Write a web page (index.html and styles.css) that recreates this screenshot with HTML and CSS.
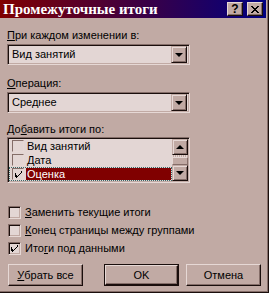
FILE: index.html
```html
<!DOCTYPE html>
<html lang="ru">

<head>
    <meta charset="UTF-8">
    <title>Промежуточные итоги</title>
    <link rel="stylesheet" href="styles.css">
</head>

<body>
    <div class="window">
        <div class="titlebar">
            <span class="title">Промежуточные итоги</span>
            <div class="title-buttons">
                <span class="tbtn">?</span>
                <span class="tbtn">
                    <svg width="8" height="7" viewBox="0 0 8 7">
                        <path d="M0 0h2v1h1v1h2v-1h1v-1h2v1h-1v1h-1v1h-1v1h1v1h1v1h1v1h-2v-1h-1v-1h-2v1h-1v1h-2v-1h1v-1h1v-1h1v-1h-1v-1h-1v-1h-1z" fill="#000"/>
                    </svg>
                </span>
            </div>
        </div>

        <div class="content">
            <div class="field-label"><u>П</u>ри каждом изменении в:</div>
            <div class="combo">
                <span class="combo-value">Вид занятий</span>
                <span class="drop-btn"><span class="arrow-down"></span></span>
            </div>

            <div class="field-label second"><u>О</u>перация:</div>
            <div class="combo">
                <span class="combo-value">Среднее</span>
                <span class="drop-btn"><span class="arrow-down"></span></span>
            </div>

            <div class="field-label third">До<u>б</u>авить итоги по:</div>
            <div class="listbox">
                <div class="list-items">
                    <div class="list-row">
                        <span class="list-check"></span>
                        <span class="row-text">Вид занятий</span>
                    </div>
                    <div class="list-row">
                        <span class="list-check"></span>
                        <span class="row-text">Дата</span>
                    </div>
                    <div class="list-row selected">
                        <span class="list-check checked">
                            <svg width="7" height="7" viewBox="0 0 7 7"><path d="M6 0h1v2h-1v1h-1v1h-1v1h-1v1h-1v1h-1v-1h-1v-4h1v2h1v1h1v-1h1v-1h1v-1h1z" fill="#000"/></svg>
                        </span>
                        <span class="row-text">Оценка</span>
                    </div>
                </div>
                <div class="scrollbar">
                    <span class="sb-btn"><span class="arrow-up"></span></span>
                    <span class="sb-track"></span>
                    <span class="sb-thumb"></span>
                    <span class="sb-btn"><span class="arrow-down"></span></span>
                </div>
            </div>

            <div class="options">
                <div class="option">
                    <span class="check"></span>
                    <span><u>З</u>аменить текущие итоги</span>
                </div>
                <div class="option">
                    <span class="check"></span>
                    <span><u>К</u>онец страницы между группами</span>
                </div>
                <div class="option">
                    <span class="check">
                        <svg width="7" height="7" viewBox="0 0 7 7"><path d="M6 0h1v2h-1v1h-1v1h-1v1h-1v1h-1v1h-1v-1h-1v-4h1v2h1v1h1v-1h1v-1h1v-1h1z" fill="#000"/></svg>
                    </span>
                    <span>Ито<u>г</u>и под данными</span>
                </div>
            </div>

            <div class="buttons">
                <span class="btn"><u>У</u>брать все</span>
                <span class="btn default"><span class="btn-inner">OK</span></span>
                <span class="btn cancel">Отмена</span>
            </div>
        </div>
    </div>
</body>

</html>
```

FILE: styles.css
```css
body {
    margin: 0;
    background: #c1aaa4;
}

.window {
    width: 269px;
    height: 293px;
    box-sizing: border-box;
    padding-right: 3px;
    background: #c1aaa4;
    box-shadow: inset -1px -1px #1a0e0c, inset -2px -2px #846d68;
    font-family: "Liberation Sans", Arial, sans-serif;
    font-size: 11px;
    color: #000;
}

.titlebar {
    height: 18px;
    display: flex;
    align-items: center;
    justify-content: space-between;
    padding: 0 3px 0 3px;
    background: linear-gradient(to right, #800000, #000080);
}

.title {
    color: #fff;
    font-family: "Liberation Serif", "Times New Roman", serif;
    font-weight: bold;
    font-size: 15px;
    line-height: 18px;
}

.title-buttons {
    display: flex;
    gap: 4px;
}

.tbtn {
    width: 16px;
    height: 14px;
    box-sizing: border-box;
    display: flex;
    align-items: center;
    justify-content: center;
    background: #c1aaa4;
    border-top: 1px solid #e6d8d5;
    border-left: 1px solid #e6d8d5;
    border-right: 1px solid #1a0e0c;
    border-bottom: 1px solid #1a0e0c;
    box-shadow: inset -1px -1px #846d68;
    font-family: "Liberation Sans", Arial, sans-serif;
    font-weight: bold;
    font-size: 12px;
    line-height: 12px;
}

.content {
    padding: 11px 0 0 7px;
}

.field-label {
    line-height: 13px;
    margin-bottom: 2px;
}

.field-label.second {
    margin-top: 12px;
}

.field-label.third {
    margin-top: 10px;
    margin-bottom: 1px;
}

.combo {
    width: 183px;
    height: 21px;
    box-sizing: border-box;
    display: flex;
    align-items: center;
    background: #e3d6d4;
    border-top: 1px solid #846d68;
    border-left: 1px solid #846d68;
    border-right: 1px solid #e6d8d5;
    border-bottom: 1px solid #e6d8d5;
    box-shadow: inset 1px 1px #1a0e0c, inset -1px -1px #c1aaa4;
    padding: 2px;
}

.combo-value {
    flex: 1;
    padding-left: 2px;
    line-height: 15px;
}

.drop-btn,
.sb-btn {
    width: 16px;
    height: 17px;
    box-sizing: border-box;
    display: flex;
    align-items: center;
    justify-content: center;
    background: #c1aaa4;
    border-top: 1px solid #c1aaa4;
    border-left: 1px solid #c1aaa4;
    border-right: 1px solid #1a0e0c;
    border-bottom: 1px solid #1a0e0c;
    box-shadow: inset 1px 1px #e6d8d5, inset -1px -1px #846d68;
}

.arrow-down {
    width: 0;
    height: 0;
    border-left: 4px solid transparent;
    border-right: 4px solid transparent;
    border-top: 4px solid #000;
}

.arrow-up {
    width: 0;
    height: 0;
    border-left: 4px solid transparent;
    border-right: 4px solid transparent;
    border-bottom: 4px solid #000;
}

.listbox {
    width: 183px;
    height: 46px;
    box-sizing: border-box;
    display: flex;
    background: #e3d6d4;
    border-top: 1px solid #846d68;
    border-left: 1px solid #846d68;
    border-right: 1px solid #e6d8d5;
    border-bottom: 1px solid #e6d8d5;
    box-shadow: inset 1px 1px #1a0e0c, inset -1px -1px #c1aaa4;
    padding: 1px;
}

.list-items {
    flex: 1;
}

.list-row {
    height: 14px;
    display: flex;
    align-items: center;
    box-sizing: border-box;
    padding-left: 3px;
}

.list-row.selected {
    outline: 1px dotted #3a6a6a;
    outline-offset: -1px;
}

.list-check {
    width: 12px;
    height: 12px;
    box-sizing: border-box;
    display: flex;
    align-items: center;
    justify-content: center;
    background: #e3d6d4;
    border-top: 1px solid #846d68;
    border-left: 1px solid #846d68;
    border-right: 1px solid #e6d8d5;
    border-bottom: 1px solid #e6d8d5;
}

.row-text {
    flex: 1;
    height: 14px;
    line-height: 15px;
    margin-left: 2px;
    padding-left: 1px;
}

.list-row.selected .row-text {
    background: #800000;
    color: #fff;
    height: 12px;
    line-height: 13px;
    margin-right: 1px;
}

.scrollbar {
    width: 16px;
    display: flex;
    flex-direction: column;
}

.sb-btn {
    height: 16px;
}

.sb-track {
    height: 2px;
    background: repeating-linear-gradient(to right, #e6d8d5 0 1px, #c1aaa4 1px 2px);
}

.sb-thumb {
    height: 8px;
    box-sizing: border-box;
    background: #c1aaa4;
    border-top: 1px solid #e6d8d5;
    border-left: 1px solid #e6d8d5;
    border-right: 1px solid #846d68;
    border-bottom: 1px solid #846d68;
}

.options {
    margin-top: 20px;
    margin-left: 1px;
}

.option {
    height: 18px;
    display: flex;
    align-items: center;
    gap: 4px;
}

.check {
    width: 13px;
    height: 13px;
    box-sizing: border-box;
    display: flex;
    align-items: center;
    justify-content: center;
    background: #e3d6d4;
    border-top: 1px solid #846d68;
    border-left: 1px solid #846d68;
    border-right: 1px solid #e6d8d5;
    border-bottom: 1px solid #e6d8d5;
    box-shadow: inset 1px 1px #1a0e0c, inset -1px -1px #c1aaa4;
}

.buttons {
    display: flex;
    margin-top: 7px;
    margin-left: 1px;
}

.btn {
    width: 75px;
    height: 22px;
    box-sizing: border-box;
    display: flex;
    align-items: center;
    justify-content: center;
    background: #c1aaa4;
    border-top: 1px solid #e6d8d5;
    border-left: 1px solid #e6d8d5;
    border-right: 1px solid #1a0e0c;
    border-bottom: 1px solid #1a0e0c;
    box-shadow: inset -1px -1px #846d68;
}

.btn.default {
    margin-left: 21px;
    border: 1px solid #1a0e0c;
    box-shadow: none;
}

.btn-inner {
    width: 100%;
    height: 100%;
    box-sizing: border-box;
    display: flex;
    align-items: center;
    justify-content: center;
    border-top: 1px solid #e6d8d5;
    border-left: 1px solid #e6d8d5;
    border-right: 1px solid #1a0e0c;
    border-bottom: 1px solid #1a0e0c;
    box-shadow: inset -1px -1px #846d68;
}

.btn.cancel {
    margin-left: 7px;
}
```
